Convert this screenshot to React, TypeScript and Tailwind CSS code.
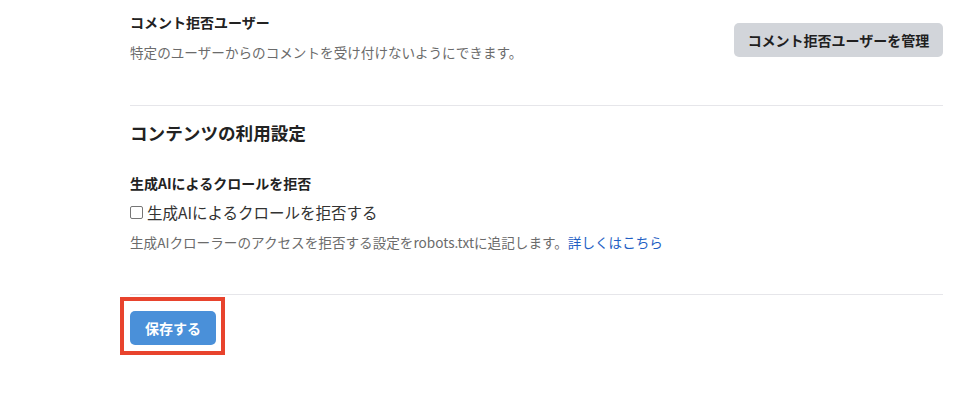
import React from "react";

export default function App() {
  return (
    <div
      className="min-h-[402px] w-[960px] bg-white text-[#222]"
      style={{ fontFamily: '"Noto Sans CJK JP", "Noto Sans", sans-serif' }}
    >
      <div className="ml-[130px] w-[813px] pt-[12px]">
        {/* Blocked users */}
        <div className="flex items-start justify-between">
          <div>
            <p className="text-[14px] leading-[20px] font-bold">
              コメント拒否ユーザー
            </p>
            <p className="mt-[10px] text-[13.6px] leading-[20px] text-[#6b6b6b]">
              特定のユーザーからのコメントを受け付けないようにできます。
            </p>
          </div>
          <button className="mt-[11px] h-[34px] w-[209px] rounded-[5px] bg-[#d2d5da] text-[14px] font-bold text-[#1f1f1f]">
            コメント拒否ユーザーを管理
          </button>
        </div>

        <div className="mt-[43px] border-t border-[#e6e6ea]" />

        {/* Content usage */}
        <h2 className="mt-[14px] text-[17.6px] leading-[26px] font-bold">
          コンテンツの利用設定
        </h2>

        <p className="mt-[27px] text-[14px] leading-[20px] font-bold">
          生成AIによるクロールを拒否
        </p>
        <label className="mt-[7px] flex items-center gap-[4px] text-[15.5px] leading-[24px] text-[#333]">
          <input
            type="checkbox"
            className="h-[13px] w-[13px] appearance-none rounded-[2px] border border-[#767676] bg-white"
          />
          生成AIによるクロールを拒否する
        </label>
        <p className="mt-[8px] text-[13.6px] leading-[20px] text-[#6b6b6b]">
          生成AIクローラーのアクセスを拒否する設定をrobots.txtに追記します。
          <a className="text-[#1f5fc4]" href="#">
            詳しくはこちら
          </a>
        </p>

        <div className="mt-[42px] border-t border-[#e6e6ea]" />

        {/* Save */}
        <div className="relative mt-[16px] inline-block">
          <button className="h-[34px] w-[86px] rounded-[5px] bg-[#4a90d9] text-[14px] font-bold text-white">
            保存する
          </button>
          <span className="pointer-events-none absolute -top-[14px] -bottom-[10px] -left-[10px] -right-[9px] border-4 border-[#e8432d]" />
        </div>
      </div>
    </div>
  );
}
